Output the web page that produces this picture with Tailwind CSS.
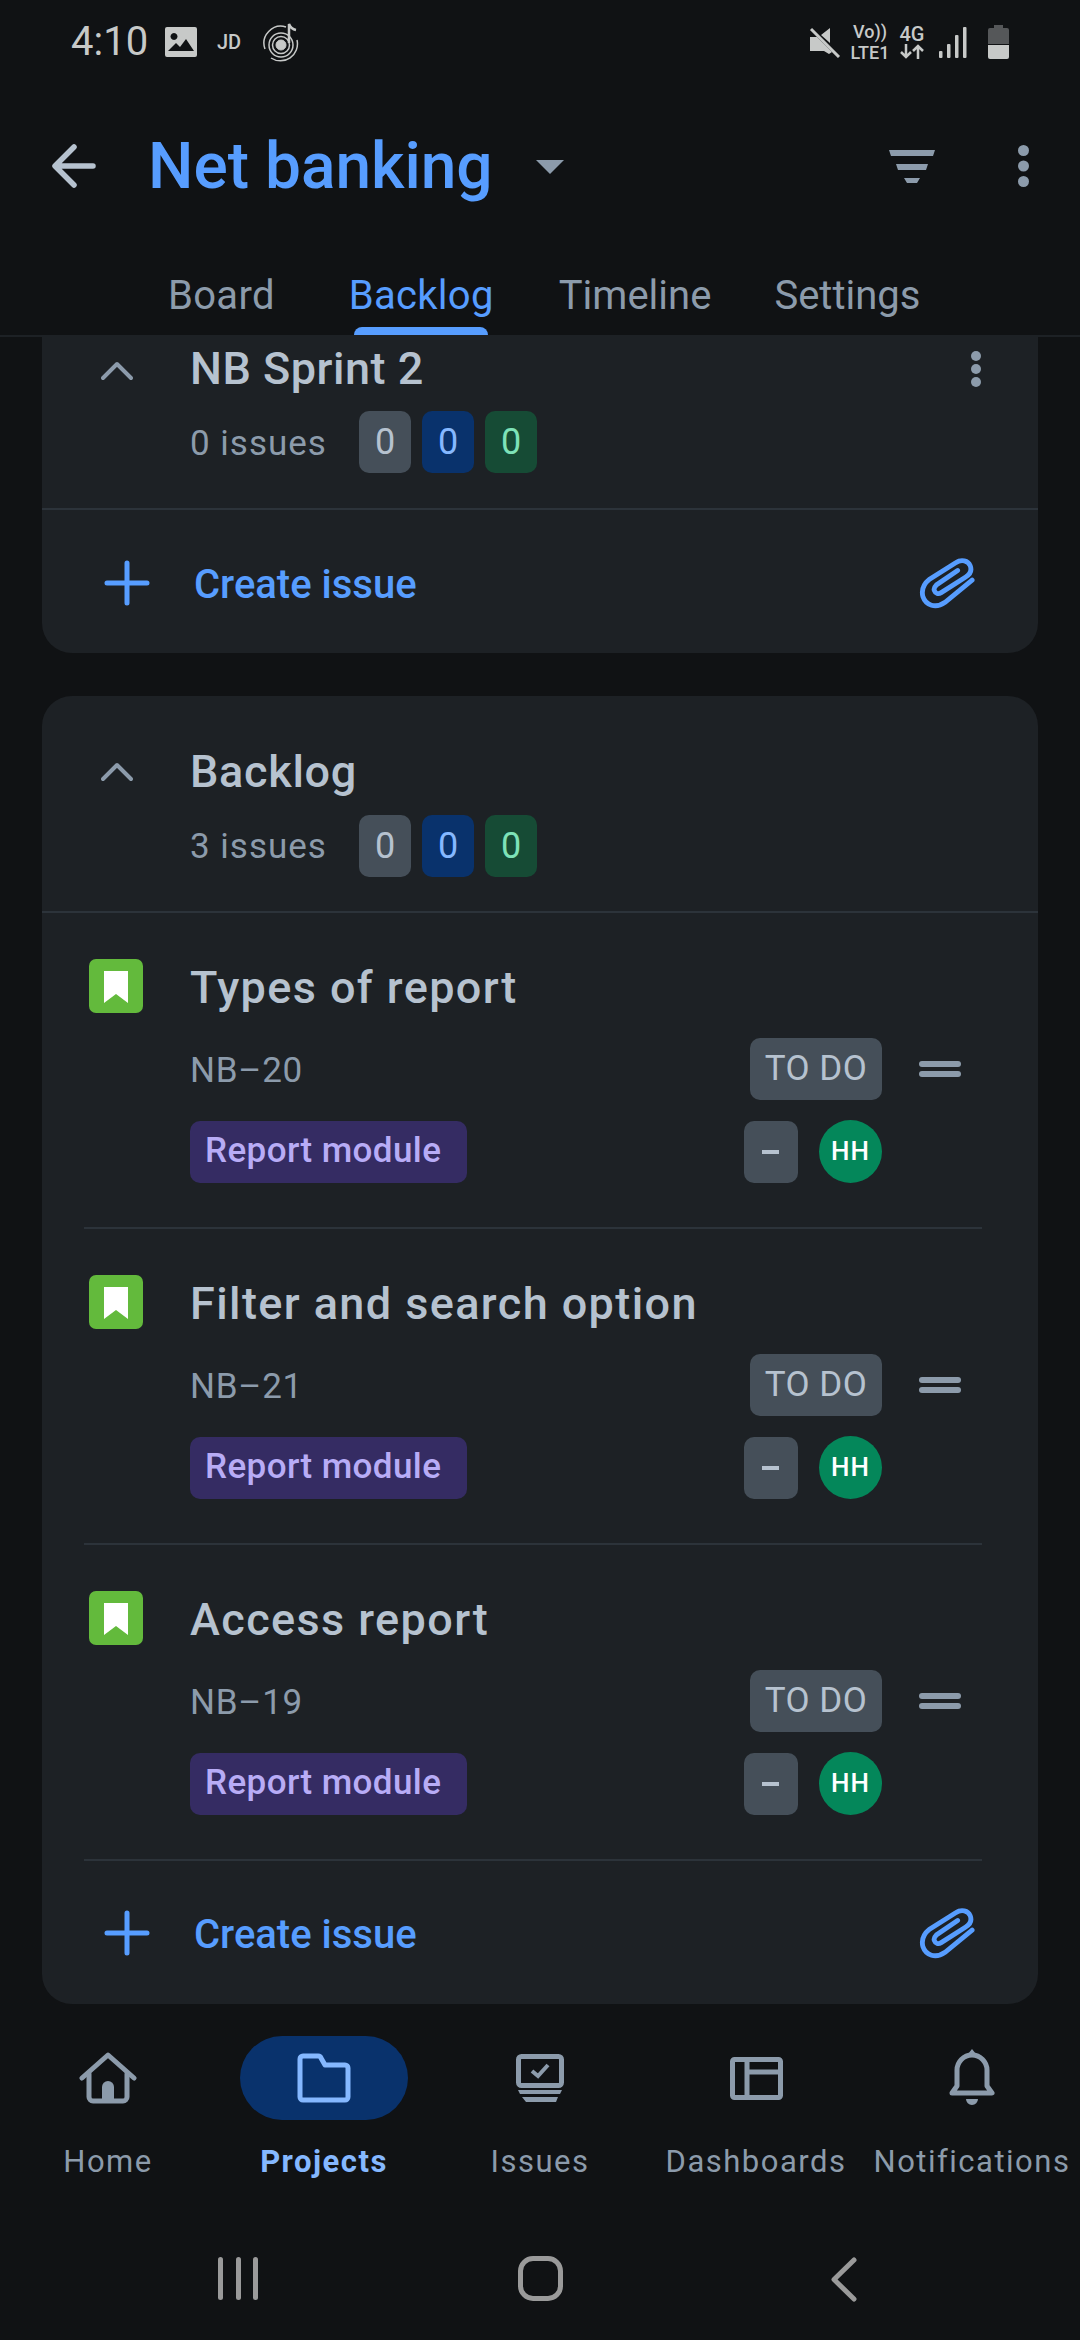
<!DOCTYPE html>
<html lang="en">
<head>
    <meta charset="UTF-8">
    <meta name="viewport" content="width=device-width, initial-scale=1.0">
    <title>Net banking backlog</title>
    <script src="https://cdn.jsdelivr.net/npm/@tailwindcss/browser@4"></script>
</head>
<body class="bg-[#101214]">
<div class="w-[1080px] h-[2340px] flex flex-col overflow-hidden bg-[#101214] [font-family:Roboto,sans-serif]">

    <!-- top bar -->
    <header class="h-[337px] shrink-0 border-b-2 border-[#1d2125]">
        <div class="h-[84px] flex items-center text-[#c7c9c8]">
            <span class="ml-[71px] w-[94px] text-[40px] leading-[48px]">4:10</span>
            <svg class="w-[32px] h-[30px]" viewBox="0 0 32 30"><path fill="#c7c9c8" fill-rule="evenodd" d="M2 0h28a2 2 0 0 1 2 2v26a2 2 0 0 1-2 2H2a2 2 0 0 1-2-2V2a2 2 0 0 1 2-2zM3 24h26L21 12l-6 8-4-4zM9 6a3.500 3.500 0 1 0 .01 0z"/></svg>
            <span class="ml-[20px] w-[24px] text-[20px] leading-[20px] font-medium">JD</span>
            <svg class="ml-[21px] w-[38px] h-[40px]" viewBox="0 0 38 40" fill="none" stroke="#c7c9c8"><path stroke-width="1.500" d="M3 27A17 17 0 0 1 24 5M35 18a17 17 0 0 1-26 18"/><circle cx="19" cy="23" r="12" stroke-width="1.500"/><circle cx="19" cy="23" r="8.500" stroke-width="1.500"/><circle cx="19" cy="23" r="5" fill="#c7c9c8"/><path stroke-width="2.500" d="M27 21V2q2 5 7 6"/></svg>
            <div class="flex-1"></div>
            <svg class="w-[32px] h-[32px]" viewBox="0 0 32 32"><path fill="#c7c9c8" d="M1 11h7l2 2 13 13-3 2-5-3H1zM12 9l9-7v15z"/><path stroke="#c7c9c8" stroke-width="3" d="M2 3l28 28"/></svg>
            <div class="ml-[9px] w-[40px] flex flex-col items-center text-[18px] leading-[21px] font-medium"><span>Vo))</span><span class="whitespace-nowrap">LTE1</span></div>
            <div class="ml-[9px] w-[26px] flex flex-col items-center text-[20px] leading-[18px] font-medium"><span>4G</span><svg class="mt-[1px] w-[24px] h-[15px]" viewBox="0 0 24 15" fill="none" stroke="#c7c9c8" stroke-width="2.500"><path d="M6 0v13M1 8l5 5 5-5M18 15V2M13 7l5-5 5 5"/></svg></div>
            <svg class="ml-[14px] w-[28px] h-[32px]" viewBox="0 0 28 32" fill="#c7c9c8"><rect x="0" y="25" width="3.500" height="7" rx="1"/><rect x="8" y="18" width="3.500" height="14" rx="1"/><rect x="16" y="9" width="3.500" height="23" rx="1"/><rect x="24" y="1" width="3.500" height="31" rx="1"/></svg>
            <svg class="ml-[21px] mr-[71px] w-[21px] h-[34px]" viewBox="0 0 21 34"><path fill="#555759" d="M6 0h9v3h4a2 2 0 0 1 2 2v14H0V5a2 2 0 0 1 2-2h4z"/><path fill="#c7c9c8" d="M0 20h21v12a2 2 0 0 1-2 2H2a2 2 0 0 1-2-2z"/></svg>
        </div>

        <div class="h-[164px] flex items-center">
            <svg class="ml-[52px] w-[44px] h-[44px]" viewBox="0 0 44 44" fill="none" stroke="#b6c2cf" stroke-width="5.500" stroke-linecap="round" stroke-linejoin="round"><path d="M41 22H4M22 3L3 22l19 19"/></svg>
            <h1 class="ml-[52px] mt-[1px] text-[64px] leading-[76px] font-medium text-[#579dff]">Net banking</h1>
            <svg class="ml-[43px] mt-[2px] w-[28px] h-[14px]" viewBox="0 0 28 14"><path fill="#8c9bab" d="M0 0h28L14 14z"/></svg>
            <div class="flex-1"></div>
            <svg class="w-[46px] h-[33px]" viewBox="0 0 46 33" fill="#8c9bab"><path d="M0 0h46l-2 6H2zM7 14h32l-2 6H9zM15 28h16l-3 5h-10z"/></svg>
            <svg class="ml-[83px] mr-[51px] w-[11px] h-[42px]" viewBox="0 0 11 42" fill="#8c9bab"><circle cx="5.500" cy="5.500" r="5.500"/><circle cx="5.500" cy="21" r="5.500"/><circle cx="5.500" cy="36.500" r="5.500"/></svg>
        </div>

        <nav class="h-[87px] flex pl-[168px] text-[40px] leading-[48px] tracking-[0.3px] text-[#8c9bab]">
            <span class="pt-[24px]">Board</span>
            <div class="ml-[74px] flex flex-col items-center">
                <span class="pt-[24px] text-[#579dff]">Backlog</span>
                <div class="mt-[7px] w-[134px] h-[8px] rounded-t-[8px] bg-[#579dff]"></div>
            </div>
            <span class="ml-[65px] pt-[24px] tracking-[0px]">Timeline</span>
            <span class="ml-[63px] pt-[24px] tracking-[0px]">Settings</span>
        </nav>
    </header>

    <main class="flex-1 px-[42px] flex flex-col">
        <!-- sprint card, scrolled under the top bar -->
        <section class="h-[316px] shrink-0 bg-[#1d2125] rounded-b-[30px]">
            <div class="h-[173px] pt-[6px] border-b-2 border-[#2c333a] flex">
                <svg class="ml-[59px] mt-[18px] w-[32px] h-[20px]" viewBox="0 0 32 20" fill="none" stroke="#8c9bab" stroke-width="4" stroke-linecap="round" stroke-linejoin="round"><path d="M2 17L16 3l14 14"/></svg>
                <div class="ml-[57px] flex-1">
                    <h2 class="text-[45px] leading-[52px] tracking-[0.5px] font-medium text-[#b6c2cf]">NB Sprint 2</h2>
                    <div class="mt-[16px] flex items-center">
                        <span class="w-[169px] mt-[5px] text-[35px] tracking-[1px] text-[#8c9bab]">0 issues</span>
                        <div class="flex gap-[11px] text-[36px]">
                            <span class="w-[52px] h-[62px] rounded-[10px] flex items-center justify-center bg-[#454f59] text-[#b6c2cf]">0</span>
                            <span class="w-[52px] h-[62px] rounded-[10px] flex items-center justify-center bg-[#09326c] text-[#85b8ff]">0</span>
                            <span class="w-[52px] h-[62px] rounded-[10px] flex items-center justify-center bg-[#164b35] text-[#7ee2b8]">0</span>
                        </div>
                    </div>
                </div>
                <svg class="mr-[57px] mt-[8px] w-[10px] h-[36px]" viewBox="0 0 10 36" fill="#8c9bab"><circle cx="5" cy="5" r="5"/><circle cx="5" cy="18" r="5"/><circle cx="5" cy="31" r="5"/></svg>
            </div>
            <div class="h-[143px] pt-[3px] flex items-center">
                <svg class="ml-[62px] w-[46px] h-[46px]" viewBox="0 0 46 46" fill="none" stroke="#579dff" stroke-width="5" stroke-linecap="round"><path d="M23 3v40M3 23h40"/></svg>
                <span class="ml-[44px] mt-[4px] text-[40px] font-medium text-[#579dff]">Create issue</span>
                <div class="flex-1"></div>
                <svg class="mr-[63px] w-[56px] h-[54px]" viewBox="0 0 58 54" fill="none" stroke="#579dff" stroke-width="5" stroke-linecap="round"><path d="M55 24L27 47C17 54 7 50 4 41C2 33 6 27 11 23L38 6C44 2 51 4 53 9C55 14 53 18 48 21L23 37C20 39 17 38 16 35C15 33 16 31 18 29L40 14"/></svg>
            </div>
        </section>

        <!-- backlog card -->
        <section class="mt-[43px] bg-[#1d2125] rounded-[30px]">
            <div class="h-[217px] pt-[50px] border-b-2 border-[#2c333a] flex">
                <svg class="ml-[59px] mt-[16px] w-[32px] h-[20px]" viewBox="0 0 32 20" fill="none" stroke="#8c9bab" stroke-width="4" stroke-linecap="round" stroke-linejoin="round"><path d="M2 17L16 3l14 14"/></svg>
                <div class="ml-[57px] flex-1">
                    <h2 class="text-[45px] leading-[52px] tracking-[0.7px] font-medium text-[#b6c2cf]">Backlog</h2>
                    <div class="mt-[17px] flex items-center">
                        <span class="w-[169px] mt-[3px] text-[35px] tracking-[1px] text-[#8c9bab]">3 issues</span>
                        <div class="flex gap-[11px] text-[36px]">
                            <span class="w-[52px] h-[62px] rounded-[10px] flex items-center justify-center bg-[#454f59] text-[#b6c2cf]">0</span>
                            <span class="w-[52px] h-[62px] rounded-[10px] flex items-center justify-center bg-[#09326c] text-[#85b8ff]">0</span>
                            <span class="w-[52px] h-[62px] rounded-[10px] flex items-center justify-center bg-[#164b35] text-[#7ee2b8]">0</span>
                        </div>
                    </div>
                </div>
            </div>

            <div class="ml-[42px] mr-[56px] h-[316px] pt-[49px] border-b-2 border-[#2c333a] flex">
                <svg class="ml-[5px] -mt-[3px] w-[54px] h-[54px]" viewBox="0 0 54 54"><rect width="54" height="54" rx="7" fill="#63ba3c"/><path fill="#fff" d="M15 12h24v32l-12-9-12 9z"/></svg>
                <div class="ml-[47px] flex-1">
                    <h3 class="text-[45px] leading-[52px] tracking-[1.4px] font-medium text-[#b6c2cf] whitespace-nowrap">Types of report</h3>
                    <div class="mt-[24px] flex items-center justify-between">
                        <span class="mt-[5px] text-[35px] tracking-[0.8px] text-[#8c9bab]">NB–20</span>
                        <div class="flex items-center gap-[37px] mr-[21px]">
                            <span class="w-[132px] h-[62px] rounded-[10px] bg-[#454f59] flex items-center justify-center text-[35px] tracking-[0.5px] text-[#b6c2cf]">TO DO</span>
                            <svg class="w-[42px] h-[16px]" viewBox="0 0 42 16" fill="#8c9bab"><rect width="42" height="6" rx="3"/><rect y="10" width="42" height="6" rx="3"/></svg>
                        </div>
                    </div>
                    <div class="mt-[20px] flex items-center justify-between mr-[100px]">
                        <span class="w-[277px] h-[62px] pl-[15px] rounded-[10px] bg-[#352c63] flex items-center text-[35px] tracking-[0.4px] font-medium text-[#b8acf6]">Report module</span>
                        <div class="flex items-center gap-[21px]">
                            <span class="w-[54px] h-[62px] rounded-[10px] bg-[#454f59] flex items-center justify-center"><span class="w-[17px] h-[4px] -ml-[2px] bg-[#b6c2cf]"></span></span>
                            <span class="w-[63px] h-[63px] rounded-full bg-[#04875a] flex items-center justify-center text-[26px] tracking-[1px] font-medium text-white">HH</span>
                        </div>
                    </div>
                </div>
            </div>

            <div class="ml-[42px] mr-[56px] h-[316px] pt-[49px] border-b-2 border-[#2c333a] flex">
                <svg class="ml-[5px] -mt-[3px] w-[54px] h-[54px]" viewBox="0 0 54 54"><rect width="54" height="54" rx="7" fill="#63ba3c"/><path fill="#fff" d="M15 12h24v32l-12-9-12 9z"/></svg>
                <div class="ml-[47px] flex-1">
                    <h3 class="text-[45px] leading-[52px] tracking-[1.4px] font-medium text-[#b6c2cf] whitespace-nowrap">Filter and search option</h3>
                    <div class="mt-[24px] flex items-center justify-between">
                        <span class="mt-[5px] text-[35px] tracking-[0.8px] text-[#8c9bab]">NB–21</span>
                        <div class="flex items-center gap-[37px] mr-[21px]">
                            <span class="w-[132px] h-[62px] rounded-[10px] bg-[#454f59] flex items-center justify-center text-[35px] tracking-[0.5px] text-[#b6c2cf]">TO DO</span>
                            <svg class="w-[42px] h-[16px]" viewBox="0 0 42 16" fill="#8c9bab"><rect width="42" height="6" rx="3"/><rect y="10" width="42" height="6" rx="3"/></svg>
                        </div>
                    </div>
                    <div class="mt-[20px] flex items-center justify-between mr-[100px]">
                        <span class="w-[277px] h-[62px] pl-[15px] rounded-[10px] bg-[#352c63] flex items-center text-[35px] tracking-[0.4px] font-medium text-[#b8acf6]">Report module</span>
                        <div class="flex items-center gap-[21px]">
                            <span class="w-[54px] h-[62px] rounded-[10px] bg-[#454f59] flex items-center justify-center"><span class="w-[17px] h-[4px] -ml-[2px] bg-[#b6c2cf]"></span></span>
                            <span class="w-[63px] h-[63px] rounded-full bg-[#04875a] flex items-center justify-center text-[26px] tracking-[1px] font-medium text-white">HH</span>
                        </div>
                    </div>
                </div>
            </div>

            <div class="ml-[42px] mr-[56px] h-[316px] pt-[49px] border-b-2 border-[#2c333a] flex">
                <svg class="ml-[5px] -mt-[3px] w-[54px] h-[54px]" viewBox="0 0 54 54"><rect width="54" height="54" rx="7" fill="#63ba3c"/><path fill="#fff" d="M15 12h24v32l-12-9-12 9z"/></svg>
                <div class="ml-[47px] flex-1">
                    <h3 class="text-[45px] leading-[52px] tracking-[1.4px] font-medium text-[#b6c2cf] whitespace-nowrap">Access report</h3>
                    <div class="mt-[24px] flex items-center justify-between">
                        <span class="mt-[5px] text-[35px] tracking-[0.8px] text-[#8c9bab]">NB–19</span>
                        <div class="flex items-center gap-[37px] mr-[21px]">
                            <span class="w-[132px] h-[62px] rounded-[10px] bg-[#454f59] flex items-center justify-center text-[35px] tracking-[0.5px] text-[#b6c2cf]">TO DO</span>
                            <svg class="w-[42px] h-[16px]" viewBox="0 0 42 16" fill="#8c9bab"><rect width="42" height="6" rx="3"/><rect y="10" width="42" height="6" rx="3"/></svg>
                        </div>
                    </div>
                    <div class="mt-[20px] flex items-center justify-between mr-[100px]">
                        <span class="w-[277px] h-[62px] pl-[15px] rounded-[10px] bg-[#352c63] flex items-center text-[35px] tracking-[0.4px] font-medium text-[#b8acf6]">Report module</span>
                        <div class="flex items-center gap-[21px]">
                            <span class="w-[54px] h-[62px] rounded-[10px] bg-[#454f59] flex items-center justify-center"><span class="w-[17px] h-[4px] -ml-[2px] bg-[#b6c2cf]"></span></span>
                            <span class="w-[63px] h-[63px] rounded-full bg-[#04875a] flex items-center justify-center text-[26px] tracking-[1px] font-medium text-white">HH</span>
                        </div>
                    </div>
                </div>
            </div>

            <div class="h-[143px] flex items-center">
                <svg class="ml-[62px] w-[46px] h-[46px]" viewBox="0 0 46 46" fill="none" stroke="#579dff" stroke-width="5" stroke-linecap="round"><path d="M23 3v40M3 23h40"/></svg>
                <span class="ml-[44px] mt-[4px] text-[40px] font-medium text-[#579dff]">Create issue</span>
                <div class="flex-1"></div>
                <svg class="mr-[63px] w-[56px] h-[54px]" viewBox="0 0 58 54" fill="none" stroke="#579dff" stroke-width="5" stroke-linecap="round"><path d="M55 24L27 47C17 54 7 50 4 41C2 33 6 27 11 23L38 6C44 2 51 4 53 9C55 14 53 18 48 21L23 37C20 39 17 38 16 35C15 33 16 31 18 29L40 14"/></svg>
            </div>
        </section>
    </main>

    <!-- bottom navigation -->
    <nav class="shrink-0 h-[182px] grid grid-cols-5 text-[31px] leading-[36px] tracking-[1.5px] text-[#8c9bab]">
        <div class="flex flex-col items-center">
            <div class="mt-[32px] h-[84px] flex items-center">
                <svg class="w-[58px] h-[52px]" viewBox="0 0 58 52" fill="none" stroke="#8c9bab" stroke-width="5" stroke-linecap="round" stroke-linejoin="round"><path d="M3 26L29 3l26 23"/><path d="M10 22v23a4 4 0 0 0 4 4h30a4 4 0 0 0 4-4V22"/><path fill="#8c9bab" stroke="none" d="M23 50V35a6 6 0 0 1 12 0v15z"/></svg>
            </div>
            <span class="mt-[24px]">Home</span>
        </div>
        <div class="flex flex-col items-center">
            <div class="mt-[32px] w-[168px] h-[84px] rounded-full bg-[#09326c] flex items-center justify-center">
                <svg class="w-[54px] h-[50px]" viewBox="0 0 54 50" fill="none" stroke="#85b8ff" stroke-width="5" stroke-linejoin="round"><path d="M3 6a3 3 0 0 1 3-3h15a3 3 0 0 1 3 2l4 7h20a3 3 0 0 1 3 3v29a3 3 0 0 1-3 3H6a3 3 0 0 1-3-3z"/></svg>
            </div>
            <span class="mt-[24px] font-bold text-[#85b8ff]">Projects</span>
        </div>
        <div class="flex flex-col items-center">
            <div class="mt-[32px] h-[84px] flex items-center">
                <svg class="w-[48px] h-[48px]" viewBox="0 0 48 48" fill="none" stroke="#8c9bab"><rect x="2.500" y="2.500" width="43" height="29" rx="3" stroke-width="5"/><path stroke-width="4" d="M16 17l6 5 10-11"/><path fill="#8c9bab" stroke="none" d="M2 36h44l-2 4H4zM6 43h36l-2 5H10z"/></svg>
            </div>
            <span class="mt-[24px]">Issues</span>
        </div>
        <div class="flex flex-col items-center">
            <div class="mt-[32px] h-[84px] flex items-center">
                <svg class="w-[53px] h-[43px]" viewBox="0 0 53 43" fill="none" stroke="#8c9bab" stroke-width="5" stroke-linejoin="round"><rect x="2.500" y="2.500" width="48" height="38" rx="2"/><path d="M17 3v37M17 15h33"/></svg>
            </div>
            <span class="mt-[24px] whitespace-nowrap">Dashboards</span>
        </div>
        <div class="flex flex-col items-center">
            <div class="mt-[32px] h-[84px] flex items-center">
                <svg class="w-[46px] h-[58px]" viewBox="0 0 46 58" fill="none" stroke="#8c9bab" stroke-width="5" stroke-linejoin="round"><path fill="#8c9bab" stroke="none" d="M19 5l4-5 4 5zM17 50h12a6 6 0 0 1-12 0z"/><path d="M3 44l5-7V21a15 15 0 0 1 30 0v16l5 7z"/></svg>
            </div>
            <span class="mt-[24px]">Notifications</span>
        </div>
    </nav>

    <!-- android buttons -->
    <div class="shrink-0 h-[154px] pt-[71px] flex items-start">
        <div class="ml-[218px] w-[40px] h-[43px] flex justify-between">
            <span class="w-[5px] h-[43px] rounded-full bg-[#9a9a9a]"></span>
            <span class="w-[5px] h-[43px] rounded-full bg-[#9a9a9a]"></span>
            <span class="w-[5px] h-[43px] rounded-full bg-[#9a9a9a]"></span>
        </div>
        <div class="ml-[260px] w-[45px] h-[45px] -mt-[1px] rounded-[15px] border-[5px] border-[#9a9a9a]"></div>
        <svg class="ml-[268px] w-[26px] h-[45px]" viewBox="0 0 26 45" fill="none" stroke="#9a9a9a" stroke-width="5" stroke-linecap="round" stroke-linejoin="round"><path d="M23 3L3 22.500 23 42"/></svg>
    </div>
</div>
</body>
</html>
